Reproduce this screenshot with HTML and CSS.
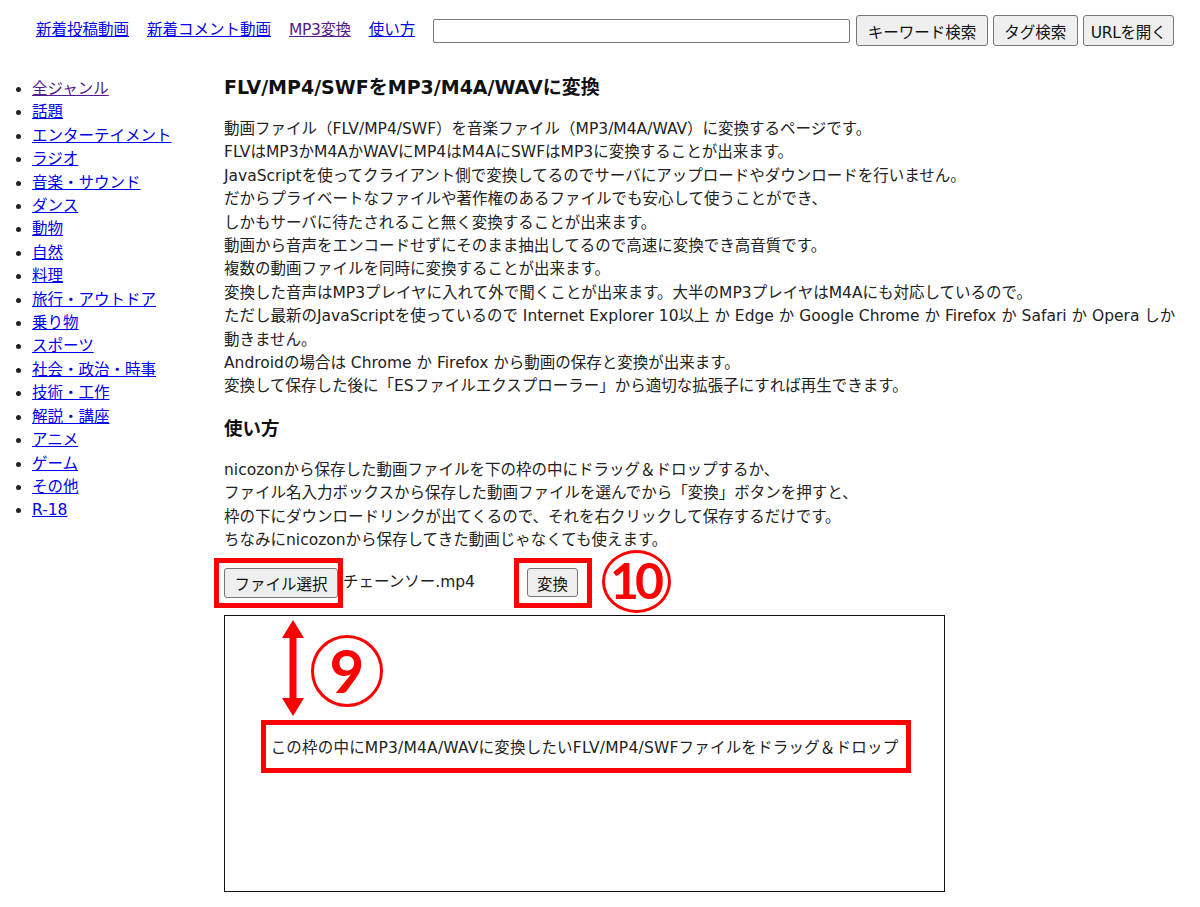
FILE: index.html
```html
<!DOCTYPE html>
<html lang="ja">
<head>
<meta charset="utf-8">
<title>FLV/MP4/SWFをMP3/M4A/WAVに変換</title>
<link rel="stylesheet" href="styles.css">
</head>
<body>
<header class="top">
  <nav class="nav">
    <a href="#">新着投稿動画</a>
    <a href="#">新着コメント動画</a>
    <a href="#" class="visited latin-tight">MP3変換</a>
    <a href="#">使い方</a>
  </nav>
  <form class="search">
    <input type="text" class="search-box">
    <button type="button" class="btn">キーワード検索</button>
    <button type="button" class="btn">タグ検索</button>
    <button type="button" class="btn btn-url">URLを開く</button>
  </form>
</header>
<div class="layout">
  <ul class="genres">
    <li><a href="#" class="visited">全ジャンル</a></li>
    <li><a href="#">話題</a></li>
    <li><a href="#">エンターテイメント</a></li>
    <li><a href="#">ラジオ</a></li>
    <li><a href="#">音楽・サウンド</a></li>
    <li><a href="#">ダンス</a></li>
    <li><a href="#">動物</a></li>
    <li><a href="#">自然</a></li>
    <li><a href="#">料理</a></li>
    <li><a href="#">旅行・アウトドア</a></li>
    <li><a href="#">乗り物</a></li>
    <li><a href="#">スポーツ</a></li>
    <li><a href="#">社会・政治・時事</a></li>
    <li><a href="#">技術・工作</a></li>
    <li><a href="#">解説・講座</a></li>
    <li><a href="#">アニメ</a></li>
    <li><a href="#">ゲーム</a></li>
    <li><a href="#">その他</a></li>
    <li><a href="#">R-18</a></li>
  </ul>
  <main class="content">
    <h1 class="title">FLV/MP4/SWFをMP3/M4A/WAVに変換</h1>
    <p class="text">動画ファイル（FLV/MP4/SWF）を音楽ファイル（MP3/M4A/WAV）に変換するページです。<br>
FLVはMP3かM4AかWAVにMP4はM4AにSWFはMP3に変換することが出来ます。<br>
JavaScriptを使ってクライアント側で変換してるのでサーバにアップロードやダウンロードを行いません。<br>
だからプライベートなファイルや著作権のあるファイルでも安心して使うことができ、<br>
しかもサーバに待たされること無く変換することが出来ます。<br>
動画から音声をエンコードせずにそのまま抽出してるので高速に変換でき高音質です。<br>
複数の動画ファイルを同時に変換することが出来ます。<br>
変換した音声はMP3プレイヤに入れて外で聞くことが出来ます。大半のMP3プレイヤはM4Aにも対応しているので。<br>
ただし最新のJavaScriptを使っているので Internet Explorer 10以上 か Edge か Google Chrome か Firefox か Safari か Opera しか<br>動きません。<br>
Androidの場合は Chrome か Firefox から動画の保存と変換が出来ます。<br>
変換して保存した後に「ESファイルエクスプローラー」から適切な拡張子にすれば再生できます。</p>
    <h2 class="subtitle">使い方</h2>
    <p class="text">nicozonから保存した動画ファイルを下の枠の中にドラッグ＆ドロップするか、<br>
ファイル名入力ボックスから保存した動画ファイルを選んでから「変換」ボタンを押すと、<br>
枠の下にダウンロードリンクが出てくるので、それを右クリックして保存するだけです。<br>
ちなみにnicozonから保存してきた動画じゃなくても使えます。</p>
    <div class="file-row">
      <button type="button" class="btn file-btn">ファイル選択</button>
      <span class="file-name">チェーンソー.mp4</span>
      <button type="button" class="btn convert-btn">変換</button>
      <span class="mark mark-file"></span>
      <span class="mark mark-convert"></span>
      <span class="num num-10">10</span>
    </div>
    <div class="drop">
      <svg class="arrow" width="24" height="96" viewBox="0 0 24 96" aria-hidden="true">
        <path d="M12 0 L23 18 L15.5 18 L15.5 78 L23 78 L12 96 L1 78 L8.5 78 L8.5 18 L1 18 Z" fill="#f00"/>
      </svg>
      <span class="num num-9">9</span>
      <div class="drop-text">この枠の中にMP3/M4A/WAVに変換したいFLV/MP4/SWFファイルをドラッグ＆ドロップ</div>
      <span class="mark mark-text"></span>
    </div>
  </main>
</div>
</body>
</html>
```
FILE: styles.css
```css
html, body {
  margin: 0;
  padding: 0;
  background: #fff;
}
body {
  font-family: "DejaVu Sans", "Noto Sans CJK JP", sans-serif;
  font-size: 15.5px;
  line-height: 23.4px;
  color: #222;
}
a {
  color: #0000ee;
  text-decoration: underline;
}
a.visited {
  color: #551a8b;
}
.latin-tight {
  letter-spacing: -0.4px;
}

/* header */
.top {
  display: flex;
  align-items: center;
  padding: 15px 0 0 36px;
  height: 31px;
}
.nav {
  display: flex;
  gap: 18px;
  margin-right: 18px;
}
.search {
  display: flex;
  align-items: center;
  gap: 5px;
  margin: 0;
}
.search-box {
  width: 417px;
  height: 24px;
  box-sizing: border-box;
  border: 1px solid #767676;
  border-radius: 2px;
  margin: 0 1px 0 0;
  padding: 0 4px;
  font: inherit;
}
.btn {
  font-family: "DejaVu Sans", "Noto Sans CJK JP", sans-serif;
  font-size: 15.5px;
  color: #111;
  height: 31px;
  padding: 0 10.5px;
  border: 1px solid #767676;
  border-radius: 3px;
  background: #efefef;
  margin: 0;
  cursor: default;
}
.btn-url {
  padding: 0 7px;
  letter-spacing: -0.3px;
}

/* layout */
.layout {
  display: flex;
  margin-top: 30px;
}
.genres {
  flex: 0 0 224px;
  box-sizing: border-box;
  margin: 2px 0 0;
  padding: 0 0 0 32px;
  list-style: disc;
}
.content {
  flex: 1;
  padding-right: 12px;
}
.title {
  font-size: 19px;
  line-height: 23.4px;
  font-weight: bold;
  color: #111;
  margin: 0;
}
.text {
  margin: 18.6px 0 0;
  white-space: nowrap;
}
.subtitle {
  font-size: 18.5px;
  line-height: 23.4px;
  font-weight: bold;
  color: #111;
  margin: 18px 0 0;
}

/* file row */
.file-row {
  position: relative;
  display: flex;
  align-items: center;
  margin-top: 15px;
  height: 30px;
}
.file-btn {
  height: 30px;
  padding: 0 9.5px;
}
.file-name {
  margin-left: 5px;
  width: 184px;
}
.convert-btn {
  height: 29px;
  padding: 0 9px;
}
.mark {
  position: absolute;
  border: 5px solid #f00;
  box-sizing: border-box;
  pointer-events: none;
}
.mark-file {
  left: -10px;
  top: -10px;
  width: 129px;
  height: 50px;
}
.mark-convert {
  left: 290px;
  top: -10px;
  width: 78px;
  height: 50px;
}
.num {
  position: absolute;
  box-sizing: border-box;
  border: 3px solid #f00;
  border-radius: 50%;
  color: #f00;
  font-family: "Lato", "Noto Sans", sans-serif;
  font-weight: 700;
  display: flex;
  align-items: center;
  justify-content: center;
}
.num-10 {
  left: 378px;
  top: -18px;
  width: 69px;
  height: 63px;
  font-size: 50px;
  letter-spacing: -4px;
  padding-right: 3px;
}

/* drop zone */
.drop {
  position: relative;
  margin-top: 17px;
  width: 721px;
  height: 277px;
  box-sizing: border-box;
  border: 1px solid #111;
  padding-top: 121px;
}
.arrow {
  position: absolute;
  left: 56px;
  top: 4px;
}
.num-9 {
  left: 86px;
  top: 19px;
  width: 72px;
  height: 72px;
  font-size: 60px;
}
.drop-text {
  text-align: center;
  font-size: 15.5px;
  letter-spacing: 0.2px;
  color: #222;
  white-space: nowrap;
}
.mark-text {
  left: 36px;
  top: 104px;
  width: 650px;
  height: 53px;
}
```
